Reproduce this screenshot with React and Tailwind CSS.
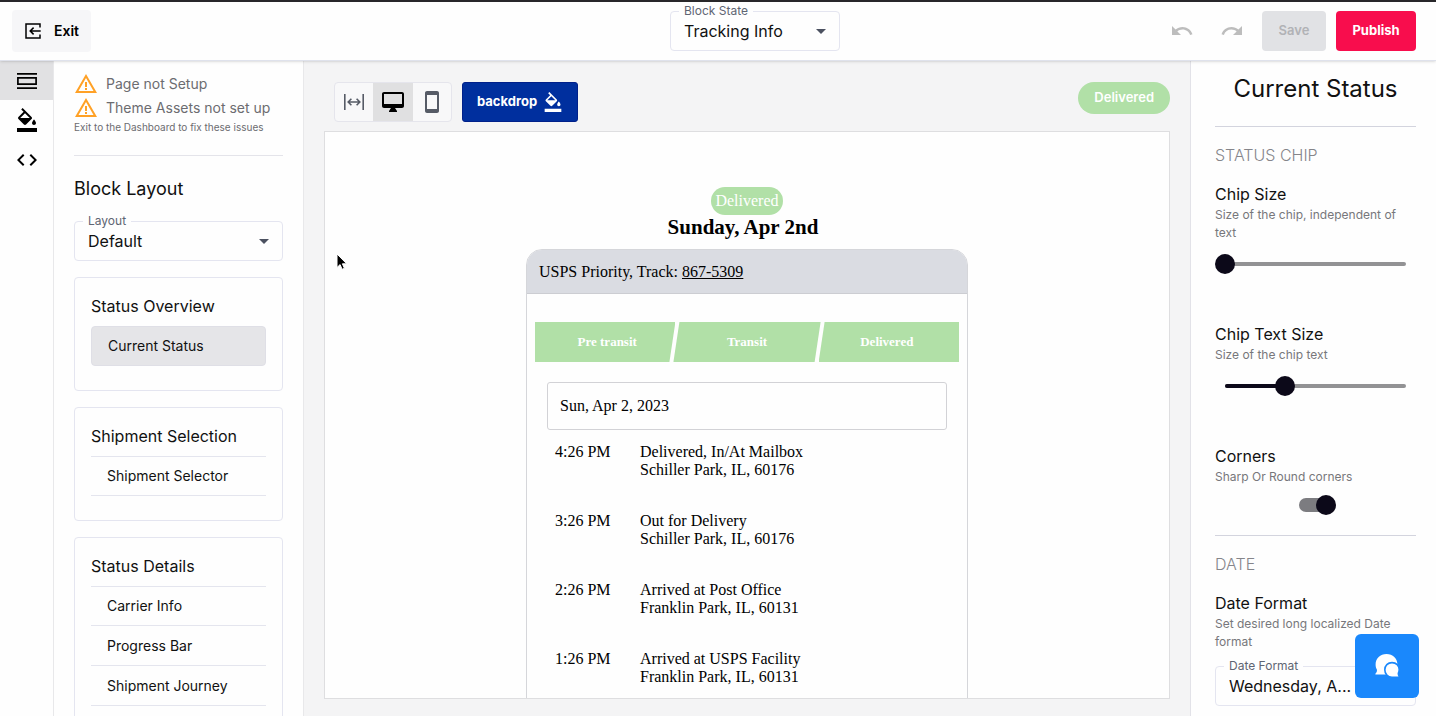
import React, { useState } from "react";
import {
  MdArrowDropDown,
  MdCode,
  MdOutlineDesktopMac,
  MdOutlineFormatColorFill,
  MdRedo,
  MdSmartphone,
  MdUndo,
  MdWarningAmber,
} from "react-icons/md";

const GROUPS = [
  { title: "Status Overview", items: ["Current Status"] },
  { title: "Shipment Selection", items: ["Shipment Selector"] },
  { title: "Status Details", items: ["Carrier Info", "Progress Bar", "Shipment Journey"] },
];

const EVENTS = [
  { time: "4:26 PM", status: "Delivered, In/At Mailbox", place: "Schiller Park, IL, 60176" },
  { time: "3:26 PM", status: "Out for Delivery", place: "Schiller Park, IL, 60176" },
  { time: "2:26 PM", status: "Arrived at Post Office", place: "Franklin Park, IL, 60131" },
  { time: "1:26 PM", status: "Arrived at USPS Facility", place: "Franklin Park, IL, 60131" },
];

function ExitIcon() {
  return (
    <svg width="18" height="18" viewBox="0 0 18 18" fill="none" stroke="currentColor" strokeWidth="1.5">
      <path d="M16 5.500V2H2v14h14v-3.500" />
      <path d="M16.700 9H6.500M9.600 5.600 6.200 9l3.400 3.400" />
    </svg>
  );
}

function LayoutIcon() {
  return (
    <svg width="20" height="18" viewBox="0 0 20 18" fill="none" stroke="currentColor" strokeWidth="1.7">
      <path d="M0 1.8h20M0 16.2h20" />
      <path d="M.9 5.9h18.2v6.2H.9z" />
    </svg>
  );
}

function FullWidthIcon() {
  return (
    <svg width="20" height="16" viewBox="0 0 20 16" fill="none" stroke="currentColor" strokeWidth="1.6">
      <path d="M.8 0v16M19.2 0v16M4.4 8h11.2M7.4 4.8 4.2 8l3.2 3.2M12.6 4.8 15.8 8l-3.2 3.2" />
    </svg>
  );
}

function ChatIcon() {
  return (
    <svg width="25" height="24" viewBox="0 0 25 24">
      <path
        fill="#fff"
        d="M11.5 0C17.8 0 22.4 4.4 22.4 10.5S17.8 20.5 11.5 20.5H1c-.7 0-.9-.7-.4-1.1 1.3-1 1.6-2.4 1.2-4.100C.9 13.8.6 12.3.6 10.5.6 4.4 5.2 0 11.5 0z"
      />
      <path
        fill="#fff"
        stroke="#1a88fc"
        strokeWidth="1.6"
        d="M17 8.6c4.300 0 7.200 3 7.200 7 0 1.500-.3 2.500-.8 3.500-.2 1.500.1 2.300.8 3 .5.500.2 1.100-.4 1.100H17c-4.200 0-7.200-3.200-7.200-7.400s3-7.200 7.200-7.200z"
      />
    </svg>
  );
}

function SelectBox({ id, label, value, className }) {
  return (
    <div className={`relative flex items-center ${className}`}>
      <label htmlFor={id} className="absolute -top-2 left-[9px] px-[5px] bg-[#fefefe] text-xs leading-4 text-[#5f6573]">
        {label}
      </label>
      <select
        id={id}
        className="w-full h-10 pl-[13px] pr-8 appearance-none rounded border border-[#e4e5f0] text-base text-[#111]"
      >
        <option>{value}</option>
      </select>
      <MdArrowDropDown size={24} className="absolute right-[7px] pointer-events-none text-[#4b5160]" />
    </div>
  );
}

function Setting({ id, title, hint, children }) {
  return (
    <div>
      <label htmlFor={id} className="block text-base leading-6 text-[#111]">
        {title}
      </label>
      <p className="text-xs leading-[18px] text-[#77777b]">{hint}</p>
      {children}
    </div>
  );
}

function Slider({ id, initial }) {
  const [value, setValue] = useState(initial);
  return (
    <div className="relative h-11 mb-9 flex items-center">
      <div className="absolute inset-x-[10px] h-1 rounded-full bg-[#929294]">
        <div className="h-1 rounded-full bg-[#0c0919]" style={{ width: `${value}%` }} />
      </div>
      <input
        id={id}
        type="range"
        value={value}
        onChange={(e) => setValue(Number(e.target.value))}
        className="relative w-full h-5 appearance-none bg-transparent [&::-webkit-slider-thumb]:appearance-none [&::-webkit-slider-thumb]:size-5 [&::-webkit-slider-thumb]:rounded-full [&::-webkit-slider-thumb]:bg-[#0c0919]"
      />
    </div>
  );
}

function Header() {
  return (
    <header className="relative z-10 h-[59px] shrink-0 px-3 flex items-center justify-between bg-[#fefefe] border-b border-[#dfe2ec] shadow-sm">
      <div className="flex-1">
        <button className="h-[42px] px-3 flex items-center gap-3 rounded bg-[#f6f6f8] text-sm font-semibold text-black">
          <ExitIcon />
          Exit
        </button>
      </div>
      <SelectBox id="block-state" label="Block State" value="Tracking Info" className="ml-[82px] w-[170px]" />
      <div className="flex-1 flex items-center justify-end pr-2">
        <button aria-label="Undo" className="mr-[26px] text-[#bdbdbd]">
          <MdUndo size={24} />
        </button>
        <button aria-label="Redo" className="mr-[18px] text-[#bdbdbd]">
          <MdRedo size={24} />
        </button>
        <button className="h-10 w-16 mr-[10px] rounded bg-[#e1e2e5] text-[13px] font-semibold text-[#b1b2b6]">Save</button>
        <button className="h-10 w-20 rounded bg-[#f80d4d] text-[13px] font-bold text-white">Publish</button>
      </div>
    </header>
  );
}

function Sidebar() {
  return (
    <aside className="w-[250px] shrink-0 px-5 pt-[11px] overflow-hidden bg-[#fefefe] border-r border-[#e8e8ea]">
      {["Page not Setup", "Theme Assets not set up"].map((text) => (
        <p key={text} className="flex items-center gap-2 text-sm leading-6 text-[#6c6c70] whitespace-nowrap">
          <MdWarningAmber size={24} className="shrink-0 text-[#ffa126]" />
          {text}
        </p>
      ))}
      <p className="text-[10px] leading-[14px] text-[#6c6c70] whitespace-nowrap">Exit to the Dashboard to fix these issues</p>
      <hr className="mt-[21px] border-[#e4e4ea]" />
      <h2 className="mt-[21px] text-lg leading-6 text-[#111]">Block Layout</h2>
      <SelectBox id="layout" label="Layout" value="Default" className="mt-5" />
      {GROUPS.map((group) => (
        <section key={group.title} className="mt-4 px-4 pt-4 pb-6 rounded border border-[#e4e5f0]">
          <h3 className="text-base leading-6 text-[#111]">{group.title}</h3>
          <ul className="mt-2">
            {group.items.map((item) => (
              <li
                key={item}
                className={
                  item === "Current Status"
                    ? "h-10 rounded-sm bg-[#e5e5e8] border border-[#dfdfe6]"
                    : "h-10 border-b border-[#e4e5ee] first:border-t"
                }
              >
                <button className="w-full h-full px-4 text-left text-sm text-[#111]">{item}</button>
              </li>
            ))}
          </ul>
        </section>
      ))}
    </aside>
  );
}

function Preview() {
  return (
    <div className="flex-1 min-h-0 pt-[55px] flex flex-col items-center overflow-hidden bg-[#fefefe] border border-[#dedee0] font-['Liberation_Serif',serif] text-black">
      <span className="px-1 h-7 shrink-0 flex items-center rounded-[14px] bg-[#b1e0a7] text-base text-white">Delivered</span>
      <h1 className="pr-2 text-[21px] leading-6 font-bold">Sunday, Apr 2nd</h1>
      <div className="mt-[10px] w-full max-w-[442px] shrink-0 rounded-t-2xl border border-[#d5d6da] overflow-hidden">
        <div className="h-11 px-3 flex items-center bg-[#dadce2] border-b border-[#cccdd2] text-base">
          <p>
            USPS Priority, Track:{" "}
            <a href="#track" className="underline">
              867-5309
            </a>
          </p>
        </div>
        <div className="mt-7 mx-2 h-10 flex text-[13px] font-bold text-white">
          <div className="flex-[139] pl-1 flex items-center justify-center bg-[#b1e0a7] [clip-path:polygon(0_0,100%_0,calc(100%-6px)_100%,0_100%)]">
            Pre transit
          </div>
          <div className="flex-[150] -mx-[2px] flex items-center justify-center bg-[#b1e0a7] [clip-path:polygon(6px_0,100%_0,calc(100%-6px)_100%,0_100%)]">
            Transit
          </div>
          <div className="flex-[139] pr-1 flex items-center justify-center bg-[#b1e0a7] [clip-path:polygon(6px_0,100%_0,100%_100%,0_100%)]">
            Delivered
          </div>
        </div>
        <div className="mt-5 mx-5 h-12 px-3 flex items-center rounded-[3px] border border-[#d2d2d6] text-base">Sun, Apr 2, 2023</div>
        <table className="mt-[13px] mx-7 text-base leading-[18px]">
          <tbody>
            {EVENTS.map((event) => (
              <tr key={event.time} className="h-[69px] align-top">
                <td className="w-[85px]">{event.time}</td>
                <td>
                  {event.status}
                  <br />
                  {event.place}
                </td>
              </tr>
            ))}
          </tbody>
        </table>
      </div>
    </div>
  );
}

function Canvas() {
  return (
    <main className="relative flex-1 min-w-0 flex flex-col px-5 pt-[21px] pb-[17px] bg-[#f4f4f5]">
      <div className="h-[49px] shrink-0 px-[10px] flex items-start">
        <div className="h-10 flex rounded border border-[#e5e5ec] overflow-hidden bg-[#f8f8f9] text-[#565b66]">
          <button aria-label="Full width" className="w-[38px] flex items-center justify-center">
            <FullWidthIcon />
          </button>
          <button aria-label="Desktop" className="w-10 flex items-center justify-center bg-[#e0e0e1] text-black">
            <MdOutlineDesktopMac size={24} />
          </button>
          <button aria-label="Mobile" className="w-[38px] flex items-center justify-center">
            <MdSmartphone size={24} />
          </button>
        </div>
        <button className="ml-[10px] h-10 px-[14px] flex items-center gap-[6px] rounded-[3px] bg-[#002f9e] border border-[#00208a] text-[13px] font-bold text-white">
          backdrop
          <MdOutlineFormatColorFill size={20} />
        </button>
        <span className="ml-auto -mr-[10px] h-8 px-4 flex items-center rounded-full bg-[#b1e0a7] text-[13px] font-semibold text-white">
          Delivered
        </span>
      </div>
      <Preview />
      <svg className="absolute left-8 top-48" width="14" height="20" viewBox="0 0 14 20">
        <path d="M1 1v13.5l3.1-2.9 2 4.7 2.3-1-2-4.5h4.3z" fill="#000" stroke="#fff" />
      </svg>
    </main>
  );
}

function Settings() {
  return (
    <aside className="w-[246px] shrink-0 pl-6 pr-5 pt-3 overflow-hidden bg-[#fefefe] border-l border-[#e2e2e8]">
      <h2 className="text-2xl leading-8 text-center text-[#111]">Current Status</h2>
      <hr className="mt-[21px] border-[#d3d4de]" />
      <h3 className="mt-4 text-base leading-6 font-light text-[#85858a]">STATUS CHIP</h3>
      <div className="mt-[15px]">
        <Setting id="chip-size" title="Chip Size" hint="Size of the chip, independent of text">
          <Slider id="chip-size" initial={0} />
        </Setting>
        <Setting id="chip-text-size" title="Chip Text Size" hint="Size of the chip text">
          <Slider id="chip-text-size" initial={33} />
        </Setting>
        <Setting id="corners" title="Corners" hint="Sharp Or Round corners">
          <div className="h-[38px] flex items-center justify-center">
            <input
              id="corners"
              type="checkbox"
              role="switch"
              defaultChecked
              className="relative w-[34px] h-[14px] appearance-none rounded-full bg-[#7c7c80] before:absolute before:-top-[3px] before:-left-[3px] before:size-5 before:rounded-full before:bg-[#0c0919] checked:before:left-[17px]"
            />
          </div>
        </Setting>
      </div>
      <hr className="mt-[11px] border-[#d3d4de]" />
      <h3 className="mt-4 text-base leading-6 font-light text-[#85858a]">DATE</h3>
      <div className="mt-[15px]">
        <Setting id="date-format" title="Date Format" hint="Set desired long localized Date format">
          <SelectBox id="date-format" label="Date Format" value="Wednesday, A..." className="mt-[15px]" />
        </Setting>
      </div>
    </aside>
  );
}

export default function App() {
  return (
    <div className="h-screen flex flex-col overflow-hidden border-t-2 border-[#28272a] bg-[#fefefe] font-[Inter,sans-serif]">
      <Header />
      <div className="flex-1 min-h-0 flex">
        <nav className="w-[54px] shrink-0 flex flex-col border-r border-[#e8e8ea] text-black">
          <button aria-label="Layout" className="h-[39px] flex items-center justify-center bg-[#e1e1e3]">
            <LayoutIcon />
          </button>
          <button aria-label="Theme" className="h-10 flex items-center justify-center">
            <MdOutlineFormatColorFill size={24} />
          </button>
          <button aria-label="Code" className="h-10 flex items-center justify-center">
            <MdCode size={24} />
          </button>
        </nav>
        <Sidebar />
        <Canvas />
        <Settings />
      </div>
      <button
        aria-label="Open chat"
        className="fixed right-[17px] bottom-[18px] z-20 size-16 flex items-center justify-center rounded-md bg-[#1a88fc]"
      >
        <ChatIcon />
      </button>
    </div>
  );
}
